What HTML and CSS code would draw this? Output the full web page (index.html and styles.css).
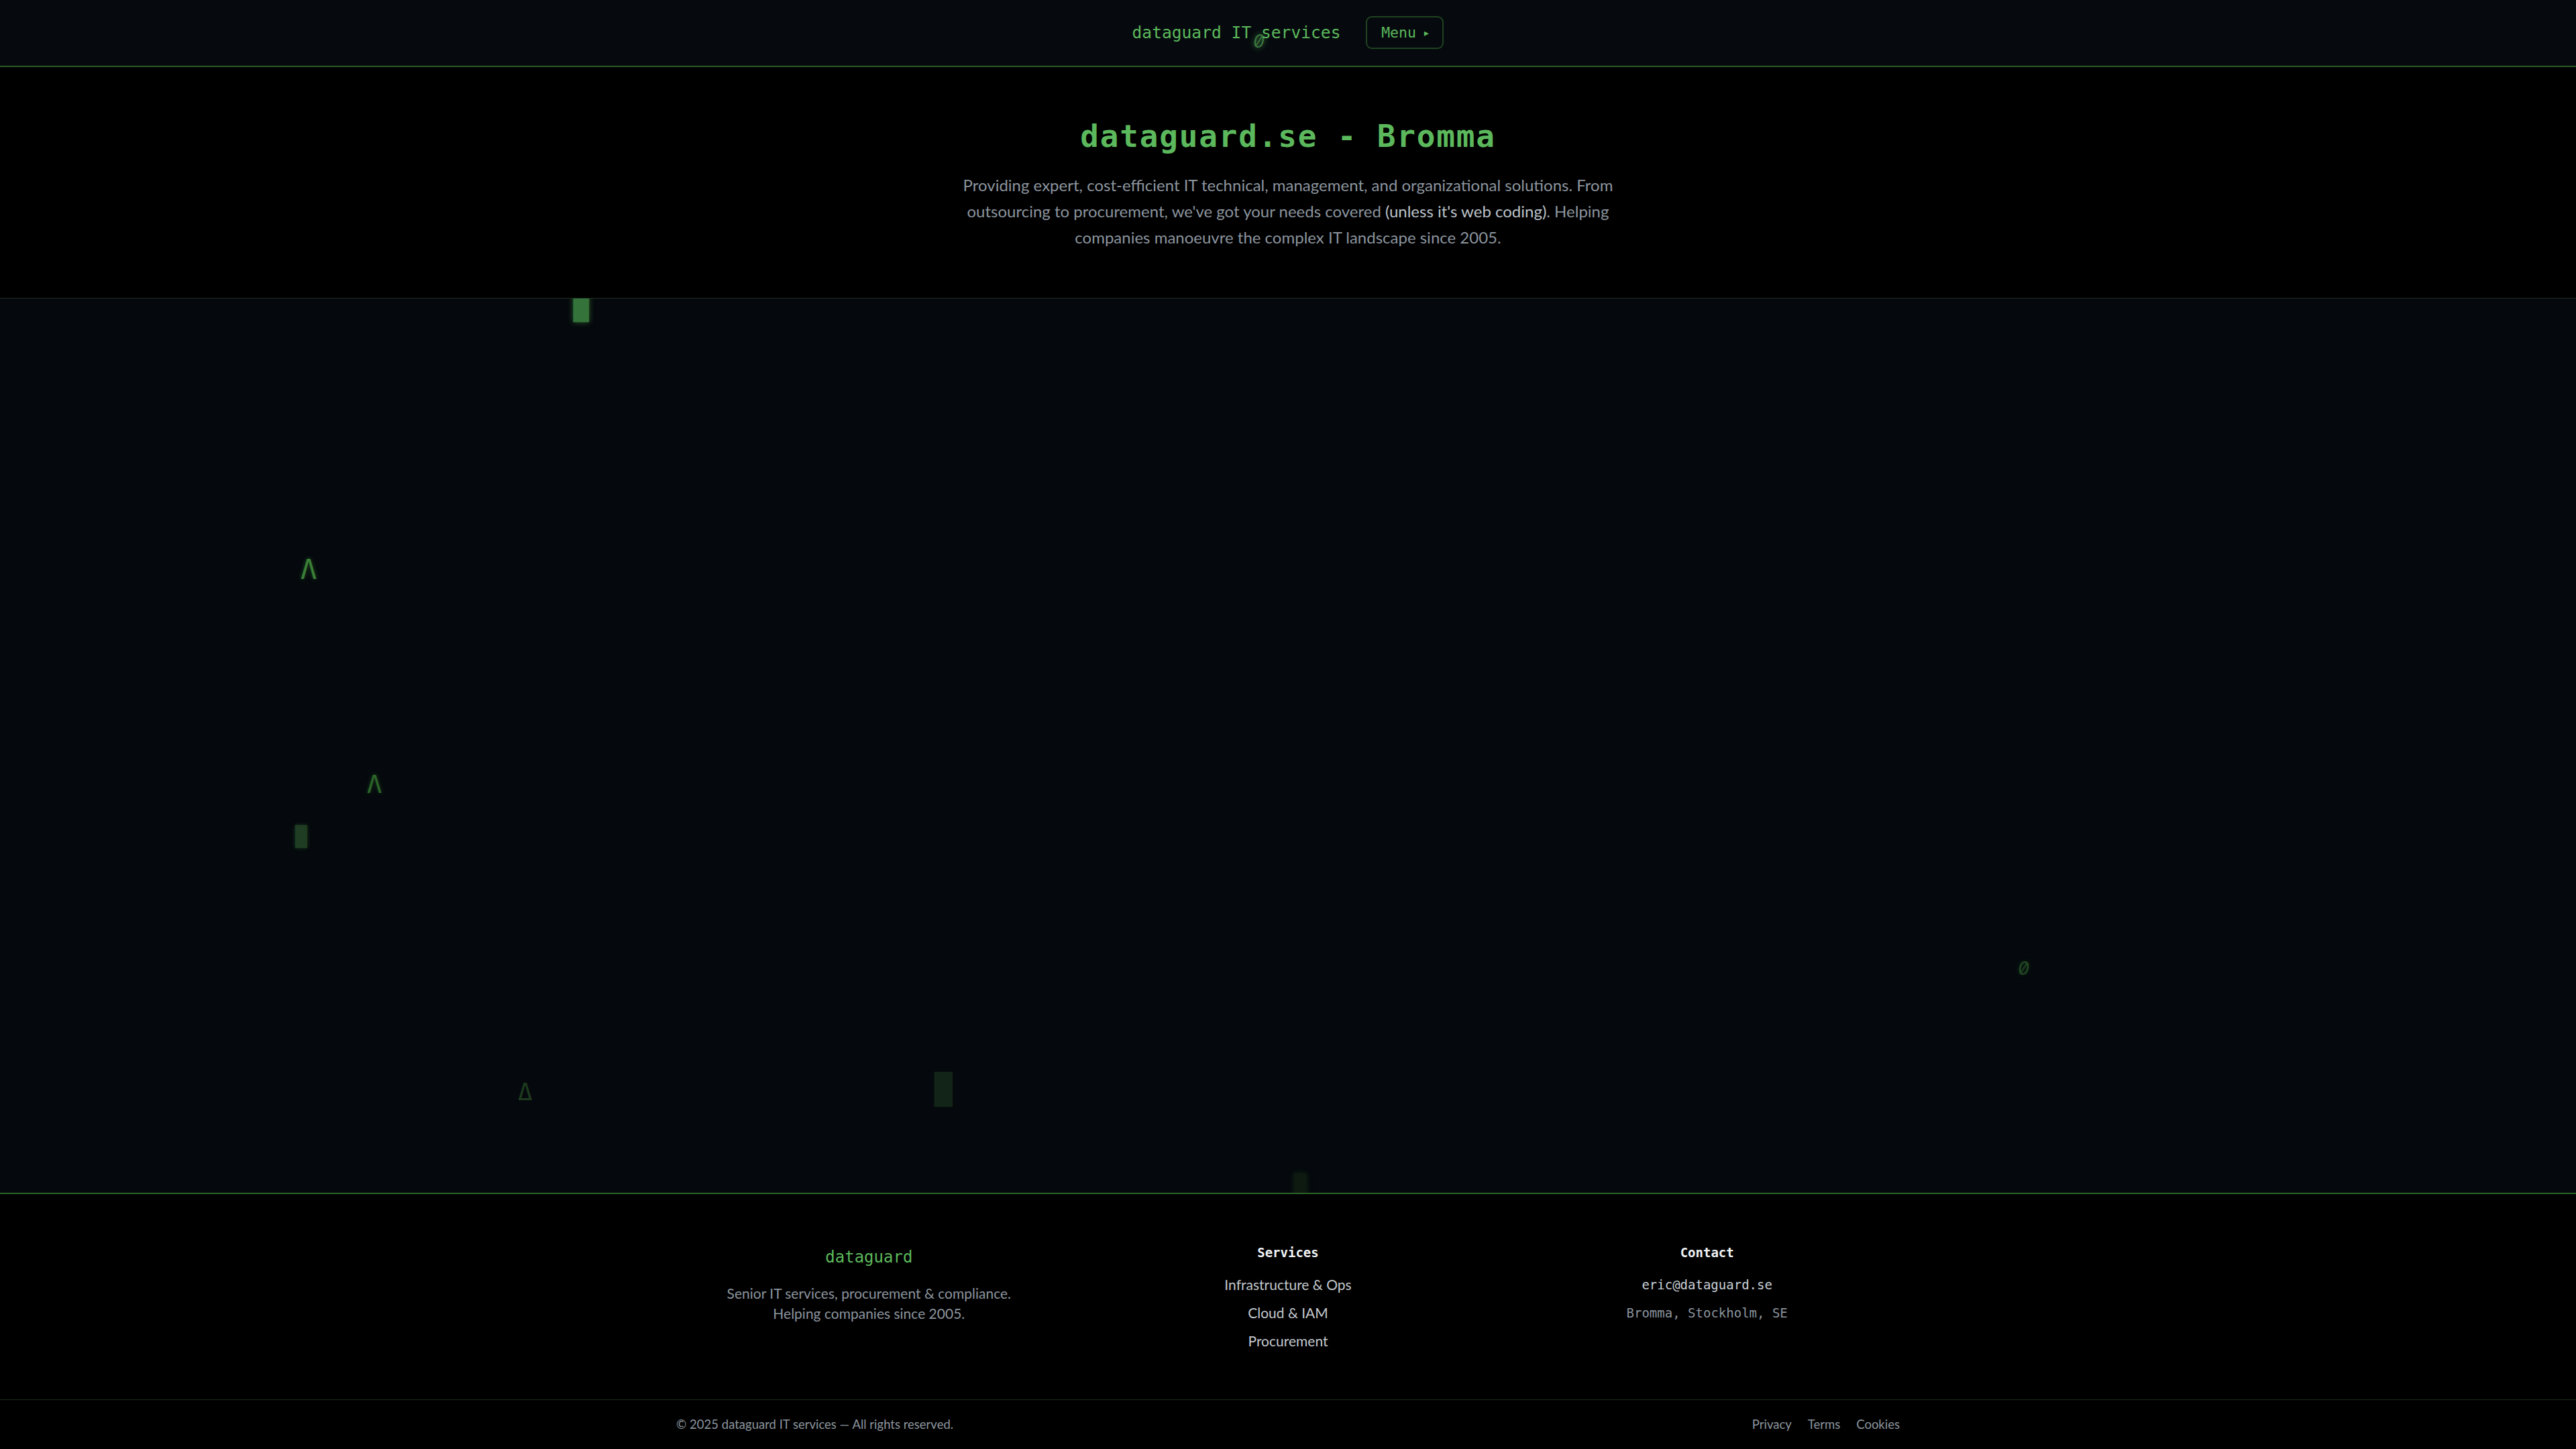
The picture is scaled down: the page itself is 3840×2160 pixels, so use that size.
FILE: index.html
```html
<!DOCTYPE html>
<html lang="en">
<head>
<meta charset="utf-8">
<title>dataguard.se - Bromma</title>
<link rel="stylesheet" href="styles.css">
</head>
<body>
<header class="topbar">
  <div class="brand">dataguard IT services</div>
  <button class="menu-btn" type="button">Menu <span class="caret">&#9656;</span></button>
  <span class="rain zero g-header">0</span>
</header>

<section class="hero">
  <h1 class="hero-title">dataguard.se - Bromma</h1>
  <p class="hero-text">Providing expert, cost-efficient IT technical, management, and organizational solutions. From outsourcing to procurement, we've got your needs covered <span class="hl">(unless it's web coding)</span>. Helping companies manoeuvre the complex IT landscape since 2005.</p>
</section>

<section class="matrix" aria-hidden="true">
  <span class="rain g1">&#9608;</span>
  <span class="rain g2">&#923;</span>
  <span class="rain g3">&#923;</span>
  <span class="rain g4">&#9608;</span>
  <span class="rain g5">&#916;</span>
  <span class="rain g6">&#9608;</span>
  <span class="rain zero g7">0</span>
  <span class="rain g8">&#9608;</span>
</section>

<footer class="site-footer">
  <div class="footer-grid">
    <div class="footer-col">
      <div class="footer-brand">dataguard</div>
      <p class="footer-about">Senior IT services, procurement &amp; compliance.<br>Helping companies since 2005.</p>
    </div>
    <div class="footer-col">
      <h4 class="footer-heading">Services</h4>
      <ul class="footer-list">
        <li>Infrastructure &amp; Ops</li>
        <li>Cloud &amp; IAM</li>
        <li>Procurement</li>
      </ul>
    </div>
    <div class="footer-col">
      <h4 class="footer-heading">Contact</h4>
      <ul class="footer-list mono">
        <li class="email">eric@dataguard.se</li>
        <li>Bromma, Stockholm, SE</li>
      </ul>
    </div>
  </div>
  <div class="footer-bottom">
    <div class="footer-bottom-inner">
      <span class="copy">&copy; 2025 dataguard IT services &mdash; All rights reserved.</span>
      <nav class="legal">
        <a href="#">Privacy</a>
        <a href="#">Terms</a>
        <a href="#">Cookies</a>
      </nav>
    </div>
  </div>
</footer>
</body>
</html>
```

FILE: styles.css
```css
* { box-sizing: border-box; }

html, body {
  margin: 0;
  padding: 0;
  background: #000;
}

body {
  font-family: "Lato", "Open Sans", sans-serif;
  color: #8b949e;
  overflow: hidden;
}

.topbar {
  position: relative;
  height: 100px;
  background: #060a0e;
  border-bottom: 2px solid #2c5a27;
  display: flex;
  align-items: center;
  justify-content: center;
  gap: 38px;
  padding-bottom: 2px;
}

.brand {
  font-family: "DejaVu Sans Mono", monospace;
  font-size: 24.6px;
  color: #5cb85c;
}

.menu-btn {
  font-family: "DejaVu Sans Mono", monospace;
  font-size: 21.5px;
  color: #5cb85c;
  background: transparent;
  border: 2px solid #1f4220;
  border-radius: 9px;
  height: 49px;
  width: 116px;
  padding: 0 0 0 2px;
  display: flex;
  align-items: center;
  justify-content: center;
  gap: 10px;
}

.caret {
  font-size: 18px;
}

.hero {
  background: #000;
  padding: 76px 0 71px;
  text-align: center;
}

.hero-title {
  margin: 0;
  font-family: "DejaVu Sans Mono", monospace;
  font-weight: bold;
  font-size: 46px;
  letter-spacing: 1.8px;
  line-height: 55px;
  color: #5cb85c;
}

.hero-text {
  margin: 25px auto 0;
  max-width: 1000px;
  font-size: 24px;
  line-height: 39px;
  color: #8b949e;
}

.hl {
  color: #bcc3ca;
}

.matrix {
  position: relative;
  height: 1336px;
  background: #05090d;
  border-top: 1px solid #1e2c1f;
  border-bottom: 2px solid #2d6428;
  overflow: hidden;
}

.rain {
  position: absolute;
  font-family: "DejaVu Sans Mono", monospace;
  line-height: 1;
  white-space: pre;
}

.zero {
  font-family: "Inter", sans-serif;
  font-feature-settings: "zero" 1;
  font-style: italic;
}

.g-header {
  left: 1868px;
  top: 48px;
  font-size: 27px;
  color: rgba(92, 184, 92, 0.55);
  text-shadow: 0 0 8px rgba(92, 184, 92, 0.6);
}

.g1 {
  left: 855px;
  top: -6px;
  font-size: 38px;
  color: #34733a;
  text-shadow: 0 0 8px rgba(80, 170, 70, 0.5);
}

.g2 {
  left: 448px;
  top: 384px;
  font-size: 40px;
  color: #3a8236;
  text-shadow: 0 0 6px rgba(80, 170, 70, 0.4);
}

.g3 {
  left: 547px;
  top: 706px;
  font-size: 37px;
  color: #2c6529;
  text-shadow: 0 0 6px rgba(80, 170, 70, 0.3);
}

.g4 {
  left: 440px;
  top: 788px;
  font-size: 29px;
  color: #1f3d22;
  text-shadow: 0 0 6px rgba(60, 140, 60, 0.3);
}

.g5 {
  left: 772px;
  top: 1165px;
  font-size: 36px;
  color: #1d3a1e;
}

.g6 {
  left: 1393px;
  top: 1157px;
  font-size: 44px;
  color: #122417;
}

.g7 {
  left: 3008px;
  top: 985px;
  font-size: 27px;
  color: #234a22;
  text-shadow: 0 0 6px rgba(60, 140, 60, 0.3);
}

.g8 {
  left: 1929px;
  top: 1307px;
  font-size: 30px;
  color: #0e1910;
  text-shadow: 0 0 8px rgba(40, 100, 40, 0.3);
}

.site-footer {
  background: #000;
}

.footer-grid {
  width: 1824px;
  margin: 0 auto;
  display: grid;
  grid-template-columns: repeat(3, 1fr);
  column-gap: 50px;
  padding: 72px 0 0;
  height: 306px;
  text-align: center;
}

.footer-brand {
  font-family: "DejaVu Sans Mono", monospace;
  font-size: 24px;
  line-height: 36px;
  color: #5cb85c;
  margin-top: 4px;
}

.footer-about {
  margin: 21px 0 0;
  font-size: 21px;
  line-height: 30px;
  color: #8b949e;
}

.footer-heading {
  margin: 0;
  font-family: "DejaVu Sans Mono", monospace;
  font-size: 19px;
  line-height: 30px;
  font-weight: 700;
  color: #f0f3f6;
}

.footer-list {
  list-style: none;
  margin: 12px 0 0;
  padding: 0;
  font-size: 21px;
  line-height: 42px;
  color: #c3c8ce;
}

.footer-list.mono {
  font-family: "DejaVu Sans Mono", monospace;
  font-size: 19px;
  color: #8b949e;
}

.footer-list .email {
  color: #c9d1d9;
}

.footer-bottom {
  border-top: 1px solid #1d2b1d;
}

.footer-bottom-inner {
  width: 1824px;
  margin: 0 auto;
  display: flex;
  justify-content: space-between;
  align-items: center;
  padding: 23px 0 30px;
  font-size: 18.5px;
  line-height: 27px;
}

.legal {
  display: flex;
  gap: 24px;
}

.legal a {
  color: #8b949e;
  text-decoration: none;
}
```
